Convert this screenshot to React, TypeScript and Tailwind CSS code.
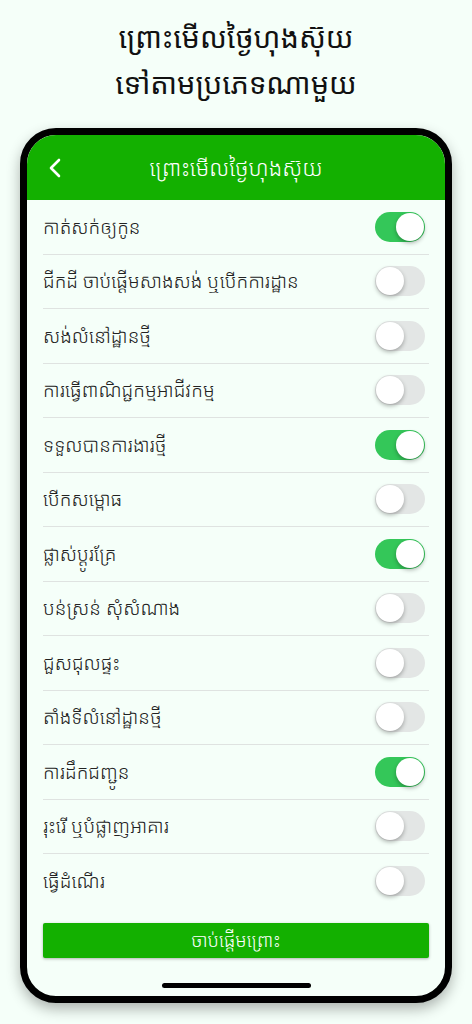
import { useState } from 'react';

const ITEMS: { label: string; on: boolean }[] = [
  { label: 'កាត់សក់ឲ្យកូន', on: true },
  { label: 'ជីកដី ចាប់ផ្ដើមសាងសង់ ឬបើកការដ្ឋាន', on: false },
  { label: 'សង់លំនៅដ្ឋានថ្មី', on: false },
  { label: 'ការធ្វើពាណិជ្ជកម្មអាជីវកម្ម', on: false },
  { label: 'ទទួលបានការងារថ្មី', on: true },
  { label: 'បើកសម្ពោធ', on: false },
  { label: 'ផ្លាស់ប្ដូរគ្រែ', on: true },
  { label: 'បន់ស្រន់ សុំសំណាង', on: false },
  { label: 'ជួសជុលផ្ទះ', on: false },
  { label: 'តាំងទីលំនៅដ្ឋានថ្មី', on: false },
  { label: 'ការដឹកជញ្ជូន', on: true },
  { label: 'រុះរើ ឬបំផ្លាញអាគារ', on: false },
  { label: 'ធ្វើដំណើរ', on: false },
];

const FONT = { fontFamily: '"Noto Sans Khmer", "Khmer OS", "Khmer OS System", "Noto Sans", sans-serif' };

function Toggle({ on, onClick }: { on: boolean; onClick: () => void }) {
  return (
    <button
      onClick={onClick}
      className={`relative mr-[4px] h-[30px] w-[50px] rounded-full transition-colors ${on ? 'bg-[#34c759]' : 'bg-[#e3e6e5]'}`}
    >
      <span
        className={`absolute top-[1px] h-[28px] w-[28px] rounded-full bg-white shadow-[0_2px_4px_rgba(0,0,0,0.3)] ${on ? 'left-[21px]' : 'left-[1px]'}`}
      />
    </button>
  );
}

export default function App() {
  const [items, setItems] = useState(ITEMS);

  return (
    <div className="min-h-[1024px] w-[472px] bg-[#f5fff9] font-[350] text-[#1a1a1a]" style={FONT}>
      <div className="flex flex-col items-center pt-[14px] text-[29px] font-normal leading-[46px] text-[#111]">
        <div>ព្រោះមើលថ្ងៃហុងស៊ុយ</div>
        <div>ទៅតាមប្រភេទណាមួយ</div>
      </div>

      <div className="mx-[20px] mt-[22px] h-[875px] overflow-hidden rounded-[36px] border-[7px] border-black bg-[#f5fff9] shadow-[0_6px_14px_rgba(0,0,0,0.3)]">
        <div className="flex h-[65px] items-center bg-[#13b000] px-[20px] text-white">
          <svg width="16" height="24" viewBox="0 0 16 24" fill="none" stroke="white" strokeWidth="2.6" strokeLinecap="round" strokeLinejoin="round">
            <path d="M12 4 L4 12 L12 20" />
          </svg>
          <div className="flex-1 pr-[16px] text-center text-[22px]">ព្រោះមើលថ្ងៃហុងស៊ុយ</div>
        </div>

        <div className="px-[16px]">
          {items.map((it, i) => (
            <div
              key={it.label}
              className={`flex h-[54.5px] items-center justify-between ${i < items.length - 1 ? 'border-b border-[#dfe3e1]' : ''}`}
            >
              <span className="text-[19px] text-[#222]">{it.label}</span>
              <Toggle
                on={it.on}
                onClick={() => setItems(items.map((x, j) => (j === i ? { ...x, on: !x.on } : x)))}
              />
            </div>
          ))}
        </div>

        <div className="px-[16px] pt-[14px]">
          <button className="h-[35px] w-full rounded-[2px] bg-[#13b000] text-[18.5px] text-white shadow-[0_1px_3px_rgba(0,0,0,0.3)]">
            ចាប់ផ្ដើមព្រោះ
          </button>
        </div>

        <div className="flex justify-center pt-[25px]">
          <div className="h-[5px] w-[149px] rounded-full bg-black" />
        </div>
      </div>
    </div>
  );
}
